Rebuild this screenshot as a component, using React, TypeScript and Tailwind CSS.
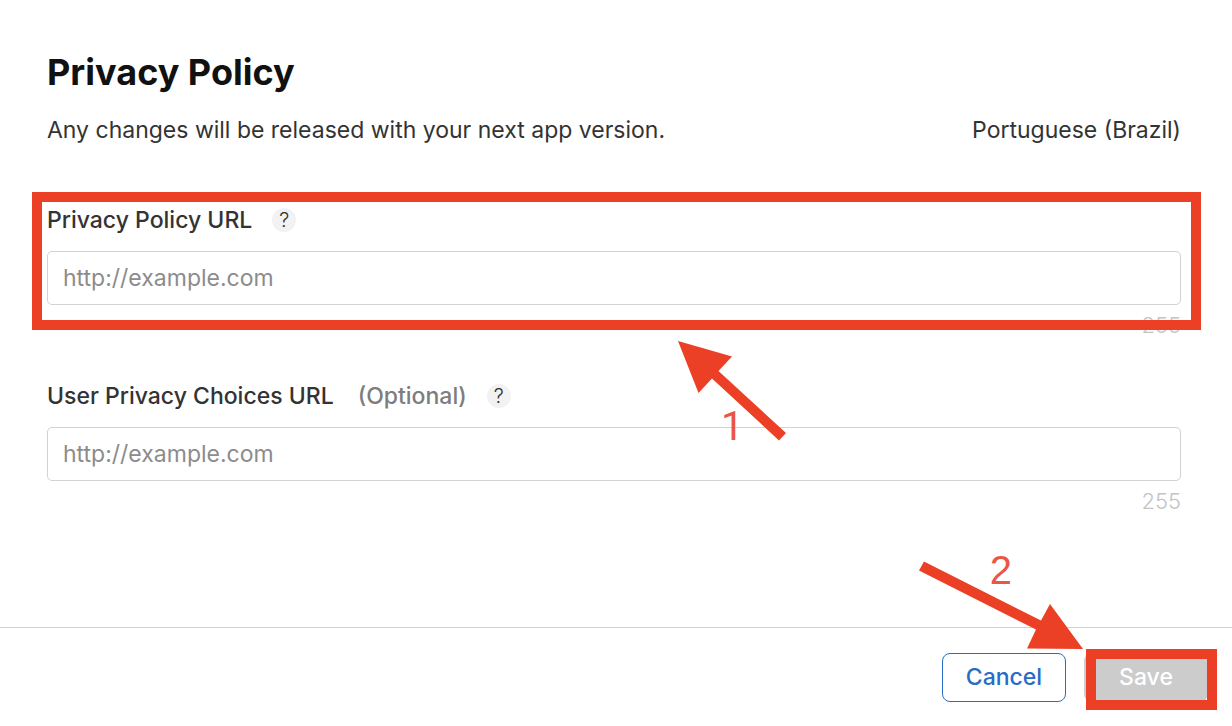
import { useState } from "react";

type UrlFieldProps = {
  id: string;
  label: string;
  optional?: boolean;
  highlighted?: boolean;
};

const MAX_LENGTH = 255;

function UrlField({ id, label, optional, highlighted }: UrlFieldProps) {
  const [value, setValue] = useState("");

  return (
    <div className="relative">
      <div className="flex h-8 items-center gap-5">
        <label htmlFor={id} className="flex gap-6 text-[23px] leading-8 font-medium text-[#333333]">
          {label}
          {optional && <span className="text-[#7d7d7d]">(Optional)</span>}
        </label>
        <button
          type="button"
          aria-label={`About ${label}`}
          className="flex size-6 items-center justify-center rounded-full bg-[#f2f2f2] text-[20px] leading-6 font-light text-[#333333]"
        >
          ?
        </button>
      </div>
      <input
        id={id}
        type="url"
        value={value}
        maxLength={MAX_LENGTH}
        onChange={(event) => setValue(event.target.value)}
        placeholder="http://example.com"
        className="mt-[15px] block h-[54px] w-full rounded-[5px] border border-[#d2d2d2] bg-white px-[15px] text-[23px] text-[#333333] placeholder:text-[#8c8c8c]"
      />
      <p className="mt-1 text-right text-[22px] leading-8 font-light text-[#c4c4c4]">
        {MAX_LENGTH - value.length}
      </p>
      {highlighted && (
        <div className="pointer-events-none absolute -top-3 -right-5 -left-[15px] h-[138px] border-10 border-[#eb4026]" />
      )}
    </div>
  );
}

export default function App() {
  return (
    <div className="flex min-h-screen flex-col bg-white font-['Inter',sans-serif]">
      <main className="relative flex-1 pt-12 pr-[51px] pl-[47px]">
        <h1 className="text-[36px] leading-[48px] font-bold text-[#111111]">Privacy Policy</h1>
        <div className="mt-[18px] flex justify-between text-[23px] leading-8 text-[#333333]">
          <p>Any changes will be released with your next app version.</p>
          <p>Portuguese (Brazil)</p>
        </div>
        <form className="mt-[58px] flex flex-col gap-[39px]">
          <UrlField id="policy-url" label="Privacy Policy URL" highlighted />
          <UrlField id="choices-url" label="User Privacy Choices URL" optional />
        </form>

        <svg
          aria-hidden="true"
          viewBox="0 0 108 100"
          className="pointer-events-none absolute top-[341px] left-[678px] h-[100px] w-[108px] fill-[#eb4026]"
        >
          <path d="M0 0 54 15.500 40.500 30 108 92 101 99.500 34 37.500 20.500 52Z" />
        </svg>
        <span className="pointer-events-none absolute top-[403px] left-[721px] font-['Roboto',sans-serif] text-[40px] leading-[48px] text-[#ec5545]">
          1
        </span>
      </main>

      <footer className="relative flex h-[99px] items-start justify-end gap-[18px] border-t border-[#d2d2d2] pt-[25px] pr-6">
        <button
          type="button"
          className="h-[49px] w-[124px] rounded-lg border border-[#2a6bc4] bg-white text-[23px] font-medium text-[#2a6bc4]"
        >
          Cancel
        </button>
        <div className="relative">
          <button
            type="button"
            disabled
            className="block h-[49px] w-[124px] rounded-lg bg-[#cccccc] text-[23px] font-medium text-white"
          >
            Save
          </button>
          <div className="pointer-events-none absolute -top-1 left-0.5 h-[61px] w-[131px] border-10 border-[#eb4026]" />
        </div>
        <svg
          aria-hidden="true"
          viewBox="0 0 164 88"
          className="pointer-events-none absolute -top-[67px] right-[149px] h-[88px] w-[164px] fill-[#eb4026]"
        >
          <path d="M5 0.500 122 59.500 131 43 164 88 108 87.500 117 68.500 0 9.500Z" />
        </svg>
        <span className="pointer-events-none absolute -top-[82px] right-[220px] font-['Liberation_Sans',sans-serif] text-[40px] leading-[48px] text-[#ec5545]">
          2
        </span>
      </footer>
    </div>
  );
}
